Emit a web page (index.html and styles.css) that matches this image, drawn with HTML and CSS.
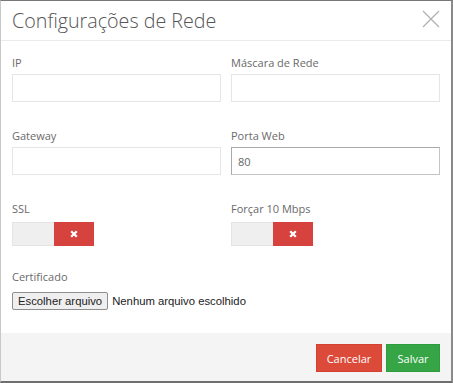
FILE: index.html
```html
<!DOCTYPE html>
<html lang="pt-BR">
<head>
<meta charset="utf-8">
<title>Configurações de Rede</title>
<link rel="stylesheet" href="styles.css">
</head>
<body>
<div class="modal">
  <div class="modal-header">
    <h4 class="modal-title">Configurações de Rede</h4>
    <button class="close" type="button" aria-label="Fechar">
      <svg width="18" height="18" viewBox="0 0 18 18"><path d="M1 1L17 17M17 1L1 17" stroke="#b0b0b0" stroke-width="1.2" fill="none"/></svg>
    </button>
  </div>
  <div class="modal-body">
    <div class="row">
      <div class="group">
        <label class="label">IP</label>
        <input class="input" type="text">
      </div>
      <div class="group">
        <label class="label">Máscara de Rede</label>
        <input class="input" type="text">
      </div>
    </div>
    <div class="row">
      <div class="group">
        <label class="label">Gateway</label>
        <input class="input" type="text">
      </div>
      <div class="group">
        <label class="label">Porta Web</label>
        <input class="input input-focus" type="text" value="80">
      </div>
    </div>
    <div class="row row-toggle">
      <div class="group">
        <label class="label label-toggle">SSL</label>
        <div class="toggle"><span class="toggle-off"></span><span class="toggle-on"><svg width="8" height="8" viewBox="0 0 8 8"><path d="M1.2 1.2L6.8 6.8M6.8 1.2L1.2 6.8" stroke="#fff" stroke-width="2.2"/></svg></span></div>
      </div>
      <div class="group">
        <label class="label label-toggle">Forçar 10 Mbps</label>
        <div class="toggle"><span class="toggle-off"></span><span class="toggle-on"><svg width="8" height="8" viewBox="0 0 8 8"><path d="M1.2 1.2L6.8 6.8M6.8 1.2L1.2 6.8" stroke="#fff" stroke-width="2.2"/></svg></span></div>
      </div>
    </div>
    <div class="file-group">
      <label class="label label-file">Certificado</label>
      <div class="file">
        <span class="file-btn">Escolher arquivo</span>
        <span class="file-text">Nenhum arquivo escolhido</span>
      </div>
    </div>
  </div>
  <div class="modal-footer">
    <button class="btn btn-danger" type="button">Cancelar</button>
    <button class="btn btn-success" type="button">Salvar</button>
  </div>
</div>
</body>
</html>
```
FILE: styles.css
```css
html, body {
  margin: 0;
  padding: 0;
  background: #fff;
}
.modal {
  box-sizing: border-box;
  width: 453px;
  height: 383px;
  display: flex;
  flex-direction: column;
  border-top: 1px solid #777;
  border-left: 1px solid #c8c8c8;
  border-right: 2px solid #8a8a8a;
  border-bottom: 2px solid #6e6e6e;
  font-family: "Open Sans", "Liberation Sans", sans-serif;
  background: #fff;
}
.modal-header {
  display: flex;
  align-items: flex-start;
  justify-content: space-between;
  height: 39px;
  box-sizing: content-box;
  padding: 0 11px 0 11px;
  border-bottom: 1px solid #ebebeb;
}
.modal-title {
  margin: 8px 0 0 0;
  font-size: 19.7px;
  line-height: 24px;
  font-weight: 300;
  color: #555;
}
.close {
  margin: 9px 0 0 0;
  padding: 0;
  border: 0;
  background: none;
  width: 18px;
  height: 18px;
  display: block;
}
.close svg { display: block; }
.modal-body {
  flex: 1;
  padding: 14px 11px 0 11px;
}
.row {
  display: grid;
  grid-template-columns: 1fr 1fr;
  column-gap: 10px;
  margin-bottom: 26px;
}
.row-toggle { margin-bottom: 23px; }
.group {
  display: flex;
  flex-direction: column;
}
.label {
  display: block;
  font-size: 11px;
  line-height: 15px;
  color: #6a6a6a;
  margin-bottom: 4px;
}
.label-toggle { margin-bottom: 6px; }
.label-file { margin-bottom: 8px; }
.input {
  box-sizing: border-box;
  width: 100%;
  height: 28px;
  margin: 0;
  padding: 0 6px;
  border: 1px solid #e6e6e6;
  background: #fff;
  font-family: "Open Sans", "Liberation Sans", sans-serif;
  font-size: 11px;
  color: #666;
  outline: none;
}
.input-focus {
  border: 1px solid #a9a9a9;
  border-right-color: #c4c4c4;
  border-bottom-color: #c4c4c4;
}
.toggle {
  display: flex;
  width: 82px;
  height: 24px;
}
.toggle-off {
  box-sizing: border-box;
  width: 42px;
  height: 24px;
  background: #efefef;
  border: 1px solid #e4e4e4;
  border-right: 0;
}
.toggle-on {
  width: 40px;
  height: 24px;
  background: #d6433f;
  display: flex;
  align-items: center;
  justify-content: center;
}
.toggle-on svg { display: block; }
.file {
  display: flex;
  align-items: center;
  font-family: "Liberation Sans", Arial, sans-serif;
  font-size: 11.3px;
  color: #222;
}
.file-btn {
  box-sizing: border-box;
  height: 18px;
  line-height: 16px;
  padding: 0 5px;
  border: 1px solid #8e8e8e;
  border-radius: 2px;
  background: #efefef;
  color: #222;
}
.file-text { margin-left: 4px; }
.modal-footer {
  height: 48px;
  box-sizing: border-box;
  padding: 11px 11px 9px 11px;
  background: #f4f4f4;
  display: flex;
  justify-content: flex-end;
  align-items: flex-start;
  gap: 4px;
}
.btn {
  box-sizing: border-box;
  height: 28px;
  margin: 0;
  padding: 0;
  border: 1px solid transparent;
  font-family: "Open Sans", "Liberation Sans", sans-serif;
  font-size: 11px;
  color: #fff;
  cursor: pointer;
}
.btn-danger {
  width: 66px;
  background: #dc4a39;
  border-color: #d43f2f;
}
.btn-success {
  width: 54px;
  background: #36a546;
  border-color: #2f9a3e;
}
```
